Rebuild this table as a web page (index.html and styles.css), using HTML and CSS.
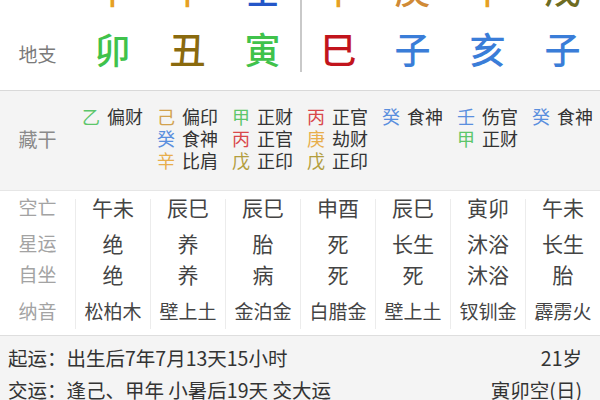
FILE: index.html
```html
<!DOCTYPE html>
<html lang="zh-CN">
<head>
<meta charset="utf-8">
<link rel="stylesheet" href="styles.css">
</head>
<body>
<div class="top">
  <div class="grow gan">
    <div class="lab"></div>
    <div class="c jin">辛</div>
    <div class="c jin">辛</div>
    <div class="c shui2">壬</div>
    <div class="c jin div">辛</div>
    <div class="c jin2">庚</div>
    <div class="c jin">辛</div>
    <div class="c tu2">戊</div>
  </div>
  <div class="grow zhi">
    <div class="lab">地支</div>
    <div class="c mu">卯</div>
    <div class="c tu">丑</div>
    <div class="c mu">寅</div>
    <div class="c huo div">巳</div>
    <div class="c shui">子</div>
    <div class="c shui">亥</div>
    <div class="c shui">子</div>
  </div>
</div>

<div class="cang">
  <div class="lab">藏干</div>
  <div class="cell"><div class="inner">
    <div class="ln"><span class="s smu">乙</span>偏财</div>
  </div></div>
  <div class="cell"><div class="inner">
    <div class="ln"><span class="s stu">己</span>偏印</div>
    <div class="ln"><span class="s sshui">癸</span>食神</div>
    <div class="ln"><span class="s sjin">辛</span>比肩</div>
  </div></div>
  <div class="cell"><div class="inner">
    <div class="ln"><span class="s smu">甲</span>正财</div>
    <div class="ln"><span class="s shuo">丙</span>正官</div>
    <div class="ln"><span class="s stu2">戊</span>正印</div>
  </div></div>
  <div class="cell"><div class="inner">
    <div class="ln"><span class="s shuo">丙</span>正官</div>
    <div class="ln"><span class="s sjin">庚</span>劫财</div>
    <div class="ln"><span class="s stu2">戊</span>正印</div>
  </div></div>
  <div class="cell"><div class="inner">
    <div class="ln"><span class="s sshui">癸</span>食神</div>
  </div></div>
  <div class="cell"><div class="inner">
    <div class="ln"><span class="s sshui">壬</span>伤官</div>
    <div class="ln"><span class="s smu">甲</span>正财</div>
  </div></div>
  <div class="cell"><div class="inner">
    <div class="ln"><span class="s sshui">癸</span>食神</div>
  </div></div>
</div>

<div class="data">
  <div class="dcol labcol">
    <div class="k k1">空亡</div>
    <div class="k k2">星运</div>
    <div class="k k3">自坐</div>
    <div class="k k4">纳音</div>
  </div>
  <div class="dcol">
    <div class="k k1">午未</div><div class="k k2">绝</div><div class="k k3">绝</div><div class="k k4">松柏木</div>
  </div>
  <div class="dcol">
    <div class="k k1">辰巳</div><div class="k k2">养</div><div class="k k3">养</div><div class="k k4">壁上土</div>
  </div>
  <div class="dcol">
    <div class="k k1">辰巳</div><div class="k k2">胎</div><div class="k k3">病</div><div class="k k4">金泊金</div>
  </div>
  <div class="dcol">
    <div class="k k1">申酉</div><div class="k k2">死</div><div class="k k3">死</div><div class="k k4">白腊金</div>
  </div>
  <div class="dcol">
    <div class="k k1">辰巳</div><div class="k k2">长生</div><div class="k k3">死</div><div class="k k4">壁上土</div>
  </div>
  <div class="dcol">
    <div class="k k1">寅卯</div><div class="k k2">沐浴</div><div class="k k3">沐浴</div><div class="k k4">钗钏金</div>
  </div>
  <div class="dcol">
    <div class="k k1">午未</div><div class="k k2">长生</div><div class="k k3">胎</div><div class="k k4">霹雳火</div>
  </div>
</div>

<div class="bottom">
  <div class="bl"><span>起运：出生后7年7月13天15小时</span><span>21岁</span></div>
  <div class="bl"><span>交运：逢己、甲年 小暑后19天 交大运</span><span>寅卯空(日)</span></div>
</div>
</body>
</html>
```

FILE: styles.css
```css
* { box-sizing: border-box; }
html, body {
  margin: 0;
  padding: 0;
  width: 600px;
  height: 400px;
  overflow: hidden;
  background: #ffffff;
  font-family: "Noto Sans CJK SC", "Noto Sans", sans-serif;
}

.top {
  margin-top: -34px;
  padding-bottom: 14px;
  border-bottom: 1px solid #d9d9d9;
  background: #fff;
}
.grow {
  display: grid;
  grid-template-columns: 75px repeat(7, 75px);
}
.gan .c {
  height: 56px;
  line-height: 44px;
  font-size: 36px;
  font-weight: 500;
  text-align: center;
}
.zhi .c {
  height: 50px;
  padding-top: 4px;
  line-height: 44px;
  font-size: 36px;
  font-weight: 500;
  text-align: center;
}
.zhi .lab {
  padding-top: 10px;
  line-height: 44px;
  font-size: 19px;
  color: #7a7a7a;
  text-align: center;
}
.div { border-left: 2px solid #c9c9c9; }

.mu { color: #40c24b; }
.tu { color: #8a6a0e; }
.huo { color: #c2141c; }
.shui { color: #3a7dd8; }
.jin { color: #e6a024; }
.jin2 { color: #d08a36; }
.shui2 { color: #2456c8; }
.tu2 { color: #6e6c22; }

.cang {
  display: grid;
  grid-template-columns: 75px repeat(7, 75px);
  height: 100px;
  padding-top: 14px;
  background: #f4f4f4;
  border-bottom: 1px solid #e6e6e6;
}
.cang .lab {
  align-self: center;
  margin-top: -18px;
  text-align: center;
  font-size: 19px;
  color: #8a8a8a;
}
.cell { text-align: center; }
.inner {
  display: inline-block;
  text-align: left;
}
.ln {
  font-size: 18px;
  line-height: 22px;
  color: #333;
  white-space: nowrap;
}
.s { margin-right: 7px; }
.smu { color: #5cc66a; }
.stu { color: #d2a24e; }
.stu2 { color: #b39e3e; }
.sshui { color: #5a8fde; }
.shuo { color: #d9474a; }
.sjin { color: #e8ae4c; }

.data {
  display: flex;
  background: #fff;
  border-bottom: 1px solid #dedede;
}
.dcol {
  width: 75px;
  display: flex;
  flex-direction: column;
  margin: 8px 0 6px;
  border-left: 1px solid #ececec;
  text-align: center;
  color: #444;
}
.labcol {
  border-left: none;
  color: #a3a3a3;
}
.k {
  height: 26px;
  line-height: 26px;
  font-size: 21px;
  white-space: nowrap;
}
.labcol .k { font-size: 19px; }
.k1 { margin-top: -5px; }
.k2 { margin-top: 10px; }
.k3 { margin-top: 5px; }
.k4 { margin-top: 11px; margin-bottom: 5px; font-size: 19px; }

.bottom {
  background: #f4f4f4;
  height: 68px;
  padding: 6px 18px 0 8px;
}
.bl {
  display: flex;
  justify-content: space-between;
  height: 32px;
  line-height: 32px;
  font-size: 19.5px;
  color: #333;
  white-space: nowrap;
}
```
